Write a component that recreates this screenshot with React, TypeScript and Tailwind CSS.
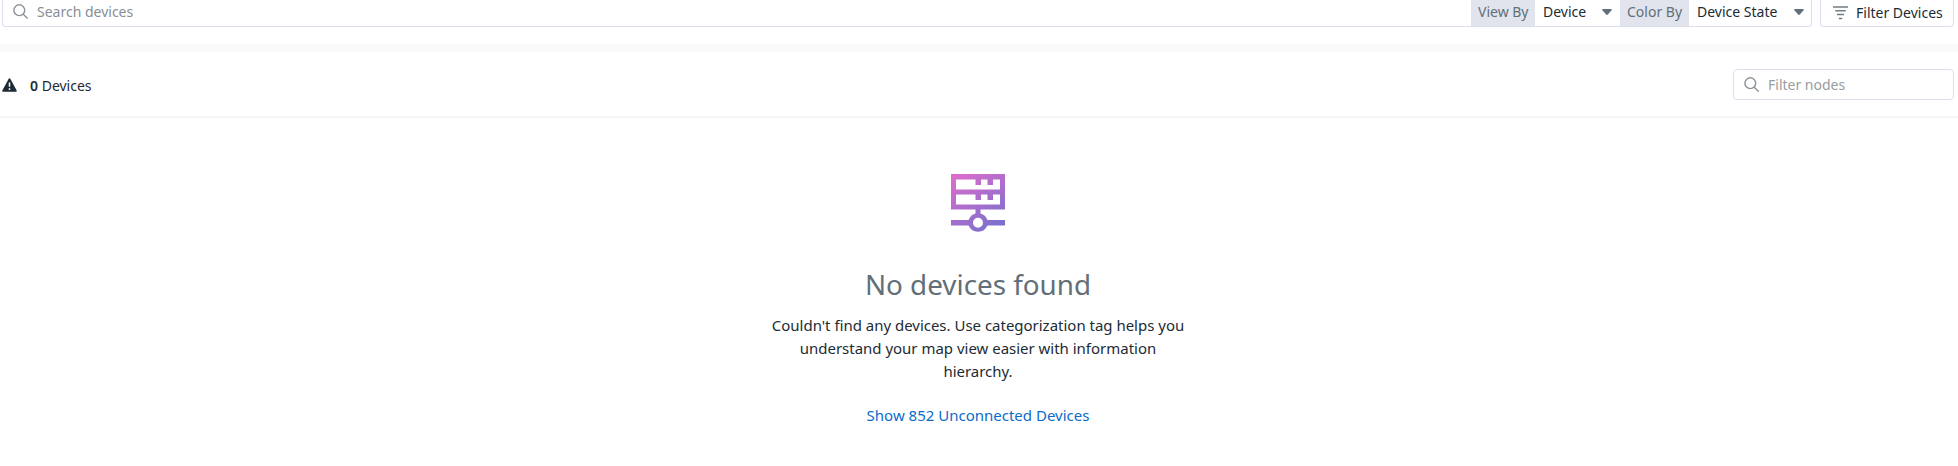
import React from "react";

function SearchIcon() {
  return (
    <svg width="16" height="16" viewBox="0 0 16 16" fill="none" stroke="#8b9299" strokeWidth="1.4" className="shrink-0">
      <circle cx="6.3" cy="6.2" r="5.4" />
      <path d="M10.2 10.2 14.7 14.6" />
    </svg>
  );
}

function Caret() {
  return (
    <svg width="10" height="6" viewBox="0 0 10 6" className="shrink-0">
      <path d="M1 0h8q1 .3.6 1.3L5.8 5.6q-.8.7-1.6 0L.4 1.3Q0 .3 1 0z" fill="#626f78" />
    </svg>
  );
}

function DeviceIcon() {
  return (
    <svg width="54" height="59" viewBox="0 0 54 59">
      <defs>
        <linearGradient id="device" x1="2" y1="-4" x2="46" y2="62" gradientUnits="userSpaceOnUse">
          <stop offset="0" stopColor="#e56ccb" />
          <stop offset="1" stopColor="#7070cf" />
        </linearGradient>
      </defs>
      <path
        fill="url(#device)"
        fillRule="evenodd"
        d="M0 0H54V35.5H29.5V39.6A10.2 10.2 0 0 1 36.4 46H54V51.5H36.4A10.2 10.2 0 0 1 17.6 51.5H0V46H17.6A10.2 10.2 0 0 1 24.5 39.6V35.5H0ZM5 5.5V15.5H49V5.5H42V11H36.5V5.5H30V11H24.500V5.500ZM5 20.500V30.500H49V20.500H42V26H36.500V20.500H30V26H24.500V20.500ZM22 48.700a5 5 0 1 0 10 0a5 5 0 1 0 -10 0Z"
      />
    </svg>
  );
}

export default function App() {
  return (
    <div className="h-[466px] w-full overflow-hidden bg-white font-['Noto_Sans',sans-serif] text-[14px] text-[#1c2b34]">
      <header className="flex h-[44px] items-start pr-[4px] pl-[2px]">
        <div className="flex h-[27px] w-[1469px] shrink-0 items-center rounded-bl-[4px] border-b border-l border-[#dcdeee] pb-[2px] pl-[10px] text-[#878e95]">
          <SearchIcon />
          <span className="-mt-[2px] ml-[8px]">Search devices</span>
        </div>
        <div className="flex h-[27px] w-[341px] shrink-0 rounded-br-[4px] border-r border-b border-[#dcdeee] leading-[24px]">
          <span className="w-[64px] bg-[#e1e4ed] pl-[7px] text-[#626f78]">View By</span>
          <div className="flex w-[85px] items-center pl-[8px]">
            <span className="h-full">Device</span>
            <span className="-mt-[3px] ml-auto pr-[8px]"><Caret /></span>
          </div>
          <span className="w-[69px] bg-[#e1e4ed] pl-[7px] text-[#626f78]">Color By</span>
          <div className="flex flex-1 items-center pl-[8px]">
            <span className="h-full">Device State</span>
            <span className="-mt-[3px] ml-auto pr-[7px]"><Caret /></span>
          </div>
        </div>
        <button className="ml-[8px] flex h-[27px] flex-1 items-center rounded-b-[4px] border-x border-b border-[#dcdeee] pl-[12px] leading-[24px]">
          <svg width="15" height="14" viewBox="0 0 15 14" stroke="#707c84" strokeWidth="1.5" className="-mt-[1px] shrink-0">
            <path d="M0 1h15M2.300 4.800h10.400M4 8.600h7M5.800 12.400h3.400" />
          </svg>
          <span className="ml-[8px] whitespace-nowrap">Filter Devices</span>
        </button>
      </header>
      <div className="h-[8px] bg-[#f9fafb]" />
      <section className="flex h-[66px] items-center border-b-2 border-[#f4f5f7] pt-[1px] pr-[4px] pl-[2px]">
        <svg width="15" height="14" viewBox="0 0 15 14" className="mt-[1px] shrink-0">
          <path d="M7.500.2Q8 .2 8.300.8L14.800 12.800Q15 13.800 14 13.800H1Q0 13.800.2 12.800L6.700.8Q7 .2 7.500.2Z" fill="#1c2b34" />
          <path d="M7.500 4.500v4.300M7.500 10.300v1.700" stroke="#fff" strokeWidth="1.500" />
        </svg>
        <span className="mt-[1px] ml-[13px]"><b className="font-semibold">0</b> Devices</span>
        <div className="ml-auto flex h-[31px] w-[221px] items-center rounded-[4px] border border-[#dcdeee] pl-[10px] text-[#979da3]">
          <SearchIcon />
          <span className="ml-[8px]">Filter nodes</span>
        </div>
      </section>
      <main className="flex flex-col items-center pt-[56px] pr-[2px]">
        <DeviceIcon />
        <h1 className="mt-[31px] text-[27.8px] leading-[40px] text-[#626f78]">No devices found</h1>
        <p className="mt-[10px] text-center text-[14.97px] leading-[23px]">
          Couldn't find any devices. Use categorization tag helps you<br />
          understand your map view easier with information<br />
          hierarchy.
        </p>
        <a className="mt-[21px] text-[15px] leading-[23px] text-[#0b6bcb]">Show 852 Unconnected Devices</a>
      </main>
    </div>
  );
}
